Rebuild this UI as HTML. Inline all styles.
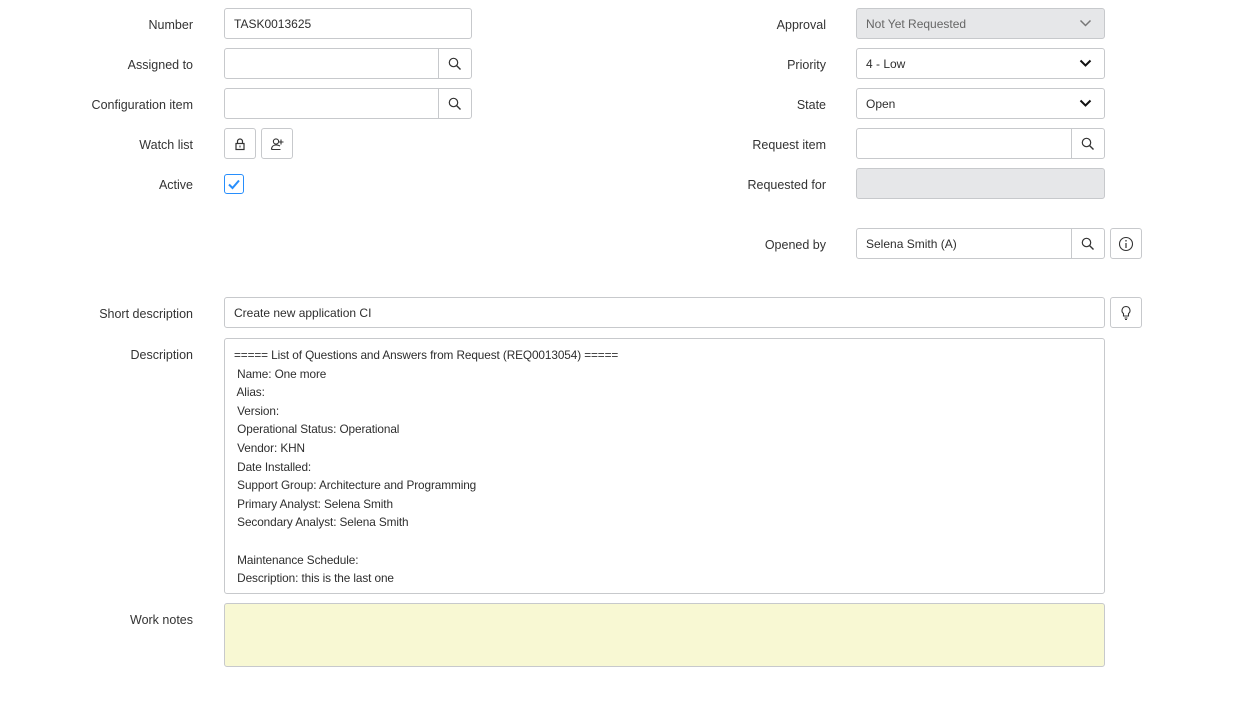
<!DOCTYPE html>
<html><head><style>
*{box-sizing:border-box;margin:0;padding:0}
body{width:1242px;height:716px;background:#fff;font-family:"Liberation Sans",sans-serif;font-size:12.5px;color:#2e2e2e;position:relative;overflow:hidden}
.l{position:absolute;text-align:right;width:200px;line-height:31px;padding-top:2px;color:#333}
.f{position:absolute;height:31px;border:1px solid #c7c9cc;border-radius:3px;background:#fff;line-height:31px;padding-left:9px;font-size:12px}
.g{background:#e6e7e9;color:#666}
.b{position:absolute;width:32px;height:31px;border:1px solid #c7c9cc;border-radius:3px;background:#fff;display:flex;align-items:center;justify-content:center}
.s{position:absolute;right:0;top:-1px;width:33px;height:31px;border-left:1px solid #c7c9cc;display:flex;align-items:center;justify-content:center}
.chev{position:absolute;right:12px;top:9px}
</style></head><body>
<svg width="0" height="0" style="position:absolute"><defs>
<symbol id="q" viewBox="0 0 14 14"><circle cx="5.5" cy="5.5" r="4.2" fill="none" stroke="#333" stroke-width="1.2"/><path d="M8.6 8.6L12.5 12.5" stroke="#333" stroke-width="1.4"/></symbol>
</defs></svg>

<div class="l" style="left:-7px;top:8px">Number</div>
<div class="f" style="left:224px;top:8px;width:248px">TASK0013625</div>
<div class="l" style="left:-7px;top:48px">Assigned to</div>
<div class="f" style="left:224px;top:48px;width:248px"><div class="s"><svg width="14" height="14"><use href="#q"/></svg></div></div>
<div class="l" style="left:-7px;top:88px">Configuration item</div>
<div class="f" style="left:224px;top:88px;width:248px"><div class="s"><svg width="14" height="14"><use href="#q"/></svg></div></div>
<div class="l" style="left:-7px;top:128px">Watch list</div>
<div class="b" style="left:224px;top:128px"><svg width="14" height="14" viewBox="0 0 14 14"><path d="M4.5 6.5V4.5a2.5 2.5 0 0 1 5 0v2" fill="none" stroke="#333" stroke-width="1.2"/><rect x="3" y="6.5" width="8" height="6" fill="none" stroke="#333" stroke-width="1.2"/><rect x="6.5" y="8.5" width="1" height="2" fill="#333"/></svg></div>
<div class="b" style="left:261px;top:128px"><svg width="14" height="14" viewBox="0 0 14 14"><circle cx="6" cy="4.5" r="2.6" fill="none" stroke="#333" stroke-width="1.1"/><path d="M1.5 12.5c0-3 2-4.5 4.5-4.5s4 1 4 1M1.5 12.5h9" fill="none" stroke="#333" stroke-width="1.1"/><path d="M11 2.5v5M8.5 5h5" stroke="#333" stroke-width="1.1"/></svg></div>
<div class="l" style="left:-7px;top:168px">Active</div>
<div style="position:absolute;left:224px;top:174px;width:20px;height:20px;border:1px solid #278efc;border-radius:3px"><svg width="18" height="18" viewBox="0 0 18 18"><path d="M4 9.5l3.5 3.5L14 5.5" fill="none" stroke="#278efc" stroke-width="2"/></svg></div>

<div class="l" style="left:626px;top:8px">Approval</div>
<div class="f g" style="left:856px;top:8px;width:249px">Not Yet Requested<svg class="chev" width="13" height="10" viewBox="0 0 13 10"><path d="M1.5 2.5l5 5 5-5" fill="none" stroke="#777" stroke-width="1.5"/></svg></div>
<div class="l" style="left:626px;top:48px">Priority</div>
<div class="f" style="left:856px;top:48px;width:249px">4 - Low<svg class="chev" width="13" height="10" viewBox="0 0 13 10"><path d="M1.5 2.5l5 5 5-5" fill="none" stroke="#111" stroke-width="2"/></svg></div>
<div class="l" style="left:626px;top:88px">State</div>
<div class="f" style="left:856px;top:88px;width:249px">Open<svg class="chev" width="13" height="10" viewBox="0 0 13 10"><path d="M1.5 2.5l5 5 5-5" fill="none" stroke="#111" stroke-width="2"/></svg></div>
<div class="l" style="left:626px;top:128px">Request item</div>
<div class="f" style="left:856px;top:128px;width:249px"><div class="s"><svg width="14" height="14"><use href="#q"/></svg></div></div>
<div class="l" style="left:626px;top:168px">Requested for</div>
<div class="f g" style="left:856px;top:168px;width:249px"></div>
<div class="l" style="left:626px;top:228px">Opened by</div>
<div class="f" style="left:856px;top:228px;width:249px">Selena Smith (A)<div class="s"><svg width="14" height="14"><use href="#q"/></svg></div></div>
<div class="b" style="left:1110px;top:228px"><svg width="16" height="16" viewBox="0 0 16 16"><circle cx="8" cy="8" r="6.5" fill="none" stroke="#333" stroke-width="1.1"/><rect x="7.4" y="7" width="1.2" height="5" fill="#333"/><circle cx="8" cy="4.8" r="0.8" fill="#333"/></svg></div>

<div class="l" style="left:-7px;top:297px">Short description</div>
<div class="f" style="left:224px;top:297px;width:881px">Create new application CI</div>
<div class="b" style="left:1110px;top:297px"><svg width="14" height="16" viewBox="0 0 14 16"><path d="M7 1.5a4 4 0 0 0-2.5 7.1V11h5V8.6A4 4 0 0 0 7 1.5zM5.5 13h3M6 14.5h2" fill="none" stroke="#333" stroke-width="1.1"/></svg></div>
<div class="l" style="left:-7px;top:338px">Description</div>
<div class="f" style="left:224px;top:338px;width:881px;height:256px;line-height:18.6px;padding:7px 9px;white-space:pre;font-size:11.8px;letter-spacing:-0.1px">===== List of Questions and Answers from Request (REQ0013054) =====
 Name: One more
 Alias: 
 Version: 
 Operational Status: Operational
 Vendor: KHN
 Date Installed: 
 Support Group: Architecture and Programming
 Primary Analyst: Selena Smith
 Secondary Analyst: Selena Smith

 Maintenance Schedule: 
 Description: this is the last one</div>
<div class="l" style="left:-7px;top:603px">Work notes</div>
<div class="f" style="left:224px;top:603px;width:881px;height:64px;background:#f8f8d3"></div>
</body></html>
